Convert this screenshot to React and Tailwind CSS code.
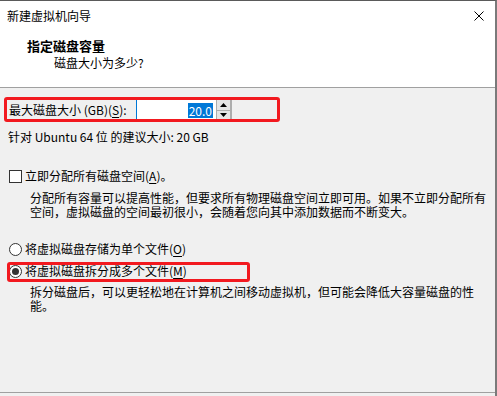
import React from 'react';

const FONT = "font-['Microsoft_YaHei','Noto_Sans_CJK_SC','Noto_Sans',sans-serif]";

const Mnemonic = ({ k }) => (
  <>
    (<span className="underline underline-offset-[2px]">{k}</span>)
  </>
);

const Checkbox = () => (
  <span className="w-[13px] h-[13px] border border-[#333333] bg-white shrink-0" />
);

const Radio = ({ checked }) => (
  <span className="w-[13px] h-[13px] rounded-full border border-[#333333] bg-white shrink-0 flex items-center justify-center">
    {checked && <span className="w-[7px] h-[7px] rounded-full bg-[#333333]" />}
  </span>
);

const SpinBox = () => (
  <div className="flex h-[22px] items-stretch">
    <div className="w-[80px] bg-white border-l border-[#0078d7] flex items-center justify-end pr-[3px]">
      <span className="bg-[#0078d7] text-white leading-[15px] px-[1px]">20.0</span>
    </div>
    <div className="w-[16px] flex flex-col border-r border-[#adadad]">
      <div className="flex-1 bg-[#e5e5e5] border border-[#adadad] flex items-center justify-center">
        <svg width="7" height="4" viewBox="0 0 7 4">
          <path d="M0 4 L3.5 0 L7 4 Z" fill="#000" />
        </svg>
      </div>
      <div className="flex-1 bg-[#e5e5e5] border border-t-0 border-[#adadad] flex items-center justify-center">
        <svg width="7" height="4" viewBox="0 0 7 4">
          <path d="M0 0 L3.5 4 L7 0 Z" fill="#000" />
        </svg>
      </div>
    </div>
  </div>
);

export default function App() {
  return (
    <div className={`${FONT} w-[497px] h-[396px] bg-[#f0f0f0] text-black text-[12px] border-t border-[#5a5a5a] border-r-2 border-r-[#7a7a7a] flex flex-col overflow-hidden`}>
      {/* title bar */}
      <div className="h-[29px] bg-white flex items-center justify-between pl-[7px] pr-[11px] shrink-0">
        <span className="leading-[16px]">新建虚拟机向导</span>
        <svg width="10" height="10" viewBox="0 0 10 10">
          <path d="M0.5 0.5 L9.5 9.5 M9.5 0.5 L0.5 9.5" stroke="#000" strokeWidth="1" />
        </svg>
      </div>

      {/* header */}
      <div className="h-[58px] bg-white border-b border-[#a0a0a0] pl-[27px] pt-[8px] shrink-0 flex flex-col">
        <span className="font-bold text-[13px] leading-[16px]">指定磁盘容量</span>
        <span className="pl-[27px] mt-[1px] leading-[16px]">磁盘大小为多少?</span>
      </div>

      {/* body */}
      <div className="flex-1 flex flex-col">
        <div className="relative mt-[11px] flex items-center pl-[9px] h-[22px]">
          <span className="w-[127px] leading-[16px]">
            最大磁盘大小 (GB)<Mnemonic k="S" />:
          </span>
          <SpinBox />
          <div className="absolute left-[4px] top-[-2px] w-[276px] h-[25px] border-[3px] border-[#f2191f] rounded-[3px] pointer-events-none" />
        </div>

        <div className="mt-[8px] pl-[8px] leading-[16px]">针对 Ubuntu 64 位 的建议大小: 20 GB</div>

        <div className="mt-[23px] pl-[9px] flex items-center gap-[3px] h-[16px]">
          <Checkbox />
          <span className="leading-[16px]">
            立即分配所有磁盘空间<Mnemonic k="A" />。
          </span>
        </div>
        <p className="mt-[7px] ml-[30px] w-[460px] leading-[14px]">
          分配所有容量可以提高性能，但要求所有物理磁盘空间立即可用。如果不立即分配所有空间，虚拟磁盘的空间最初很小，会随着您向其中添加数据而不断变大。
        </p>

        <div className="mt-[22px] pl-[9px] flex items-center gap-[3px] h-[16px]">
          <Radio />
          <span className="leading-[16px]">
            将虚拟磁盘存储为单个文件<Mnemonic k="O" />
          </span>
        </div>
        <div className="relative mt-[6px] pl-[9px] flex items-center gap-[3px] h-[16px]">
          <Radio checked />
          <span className="leading-[16px]">
            将虚拟磁盘拆分成多个文件<Mnemonic k="M" />
          </span>
          <div className="absolute left-[7px] top-[-1px] w-[243px] h-[20px] border-[3px] border-[#f2191f] rounded-[3px] pointer-events-none" />
        </div>
        <p className="mt-[6px] ml-[30px] w-[460px] leading-[14px]">
          拆分磁盘后，可以更轻松地在计算机之间移动虚拟机，但可能会降低大容量磁盘的性能。
        </p>
      </div>

      {/* bottom separator */}
      <div className="h-[4px] border-t border-[#a0a0a0] shrink-0" />
    </div>
  );
}
